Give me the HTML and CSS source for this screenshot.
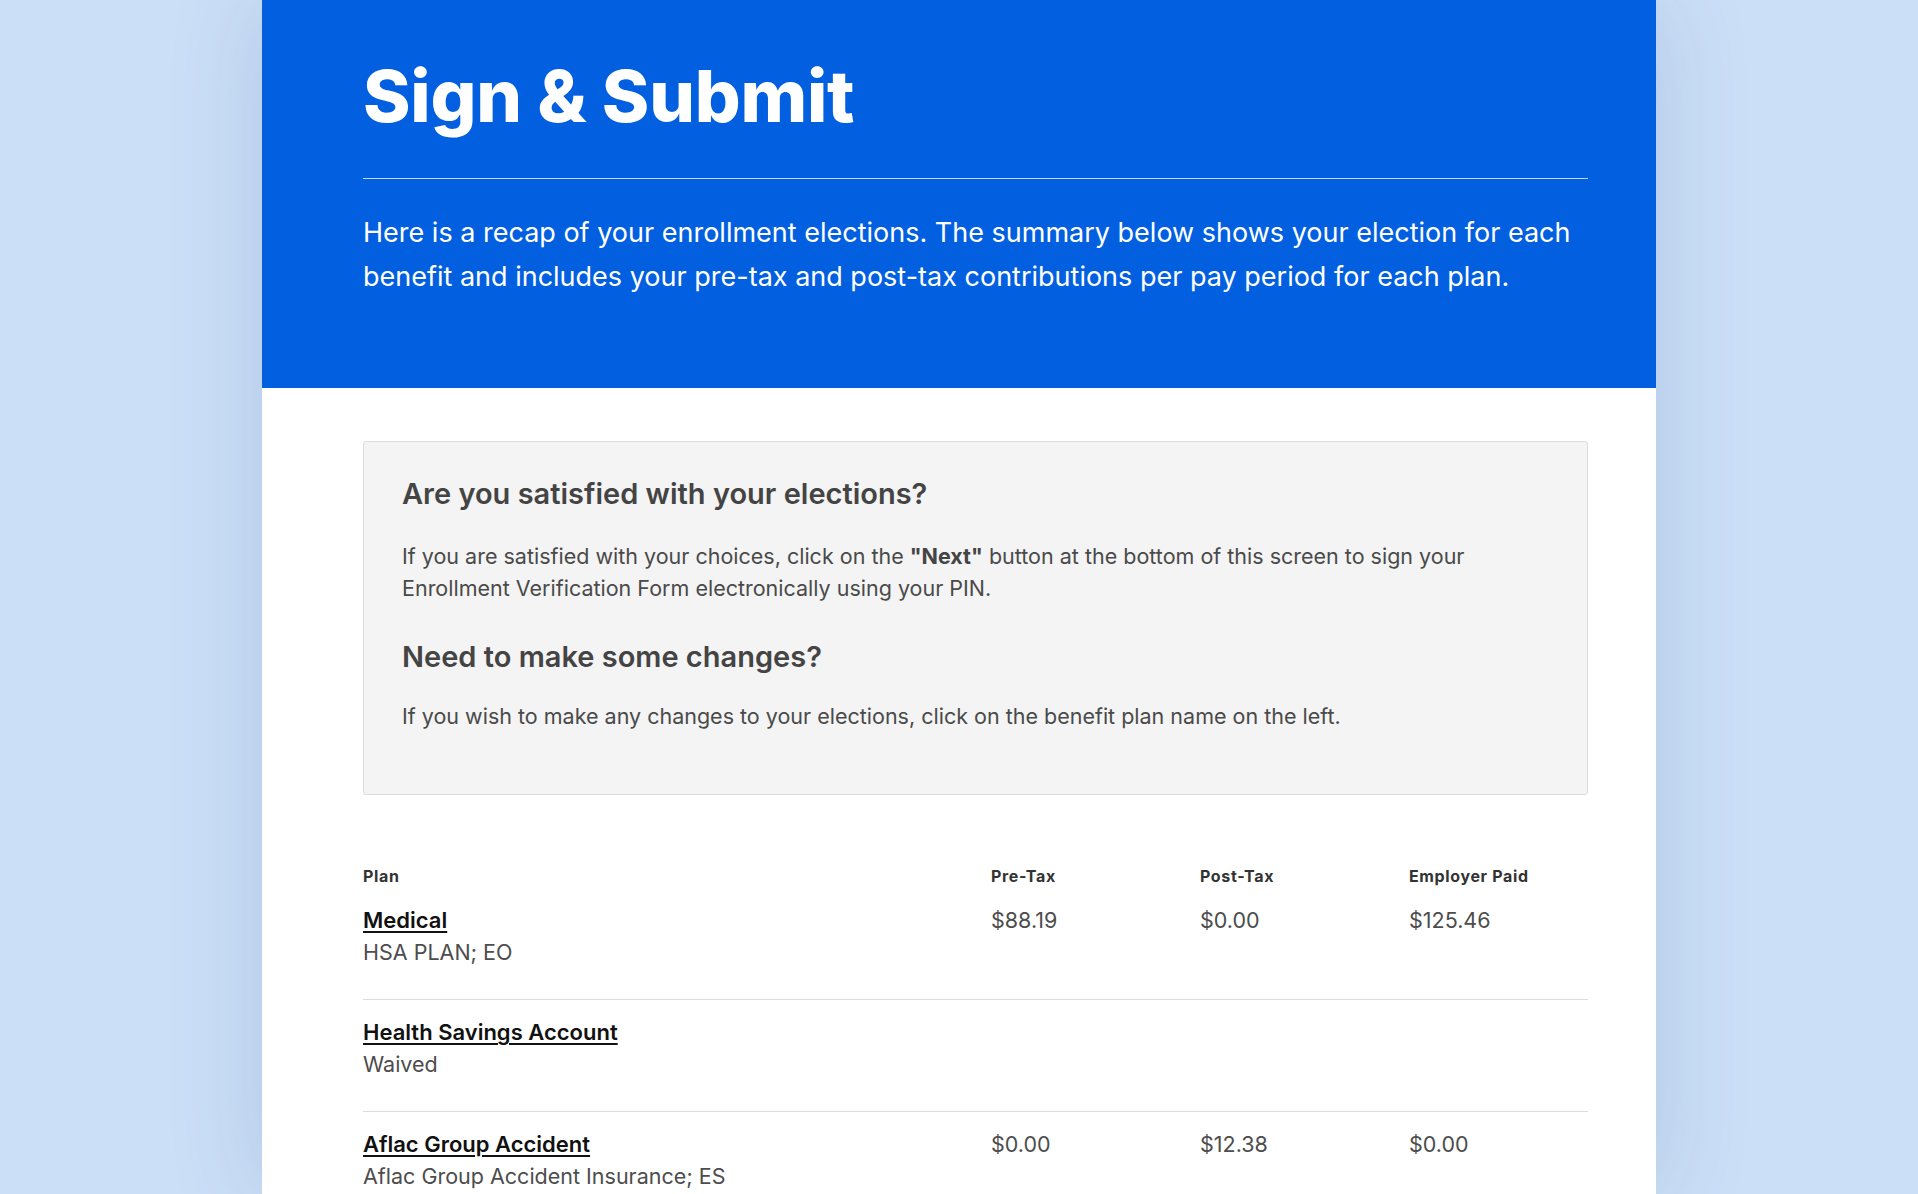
FILE: index.html
```html
<!DOCTYPE html>
<html lang="en">
<head>
<meta charset="utf-8">
<title>Sign &amp; Submit</title>
<link rel="stylesheet" href="styles.css">
</head>
<body>
<main class="card">
  <header class="hero">
    <h1 class="hero-title">Sign &amp; Submit</h1>
    <hr class="hero-rule">
    <p class="hero-text">Here is a recap of your enrollment elections. The summary below shows your election for each benefit and includes your pre-tax and post-tax contributions per pay period for each plan.</p>
  </header>
  <section class="content">
    <div class="notice">
      <h2 class="notice-title">Are you satisfied with your elections?</h2>
      <p class="notice-text">If you are satisfied with your choices, click on the <strong>"Next"</strong> button at the bottom of this screen to sign your Enrollment Verification Form electronically using your PIN.</p>
      <h2 class="notice-title second">Need to make some changes?</h2>
      <p class="notice-text">If you wish to make any changes to your elections, click on the benefit plan name on the left.</p>
    </div>

    <div class="plans">
      <div class="plans-head">
        <span>Plan</span>
        <span>Pre-Tax</span>
        <span>Post-Tax</span>
        <span>Employer Paid</span>
      </div>
      <div class="plan-row">
        <div class="plan-name"><a href="#" class="plan-link">Medical</a><span class="plan-sub">HSA PLAN; EO</span></div>
        <span class="amount">$88.19</span>
        <span class="amount">$0.00</span>
        <span class="amount">$125.46</span>
      </div>
      <div class="plan-row">
        <div class="plan-name"><a href="#" class="plan-link">Health Savings Account</a><span class="plan-sub">Waived</span></div>
        <span class="amount"></span>
        <span class="amount"></span>
        <span class="amount"></span>
      </div>
      <div class="plan-row last">
        <div class="plan-name"><a href="#" class="plan-link">Aflac Group Accident</a><span class="plan-sub">Aflac Group Accident Insurance; ES</span></div>
        <span class="amount">$0.00</span>
        <span class="amount">$12.38</span>
        <span class="amount">$0.00</span>
      </div>
    </div>
  </section>
</main>
</body>
</html>
```
FILE: styles.css
```css
* { box-sizing: border-box; }

html, body {
  margin: 0;
  padding: 0;
}

body {
  background: #cbdff7;
  font-family: "Inter", "Liberation Sans", Arial, sans-serif;
  color: #444;
  height: 1194px;
  overflow: hidden;
}

.card {
  width: 1394px;
  margin: 0 auto;
  background: #fff;
  min-height: 1194px;
  box-shadow: 0 0 90px rgba(40, 70, 130, 0.16);
}

.hero {
  background: #025fe0;
  color: #fff;
  padding: 53px 68px 89px 101px;
}

.hero-title {
  margin: 0;
  font-size: 72px;
  line-height: 1.2;
  font-weight: 800;
  letter-spacing: -0.003em;
}

.hero-rule {
  margin: 39px 0 32px;
  border: 0;
  height: 1px;
  background: rgba(255, 255, 255, 0.75);
}

.hero-text {
  margin: 0;
  font-size: 27px;
  line-height: 44px;
  font-weight: 400;
}

.content {
  padding: 53px 68px 0 101px;
}

.notice {
  background: #f4f4f4;
  border: 1px solid #dcdcdc;
  border-radius: 3px;
  padding: 34px 38px 62px;
}

.notice-title {
  margin: 0 0 28px;
  font-size: 29px;
  line-height: 36px;
  font-weight: 600;
  color: #444;
}

.notice-title.second {
  margin-top: 35px;
  margin-bottom: 25px;
}

.notice-text {
  margin: 0;
  font-size: 21.5px;
  line-height: 32px;
  color: #4a4a4a;
}

.notice-text strong {
  font-weight: 700;
  color: #444;
}

.plans {
  margin-top: 71px;
}

.plans-head,
.plan-row {
  display: grid;
  grid-template-columns: 628px 209px 209px 1fr;
}

.plans-head {
  font-size: 16px;
  line-height: 20px;
  font-weight: 700;
  letter-spacing: 0.04em;
  color: #333;
}

.plan-row {
  padding: 18px 0 31px;
  border-bottom: 1px solid #dcdcdc;
}

.plan-row + .plan-row {
  padding-top: 16px;
}

.plan-row.last {
  padding-bottom: 0;
  border-bottom: 0;
}

.plan-name {
  display: flex;
  flex-direction: column;
  align-items: flex-start;
}

.plan-link {
  font-size: 22px;
  line-height: 32px;
  font-weight: 600;
  color: #111;
  text-decoration: underline;
  text-underline-offset: 3px;
  text-decoration-thickness: 2px;
}

.plan-sub,
.amount {
  font-size: 21.5px;
  line-height: 32px;
  color: #4d4d4d;
}
```
